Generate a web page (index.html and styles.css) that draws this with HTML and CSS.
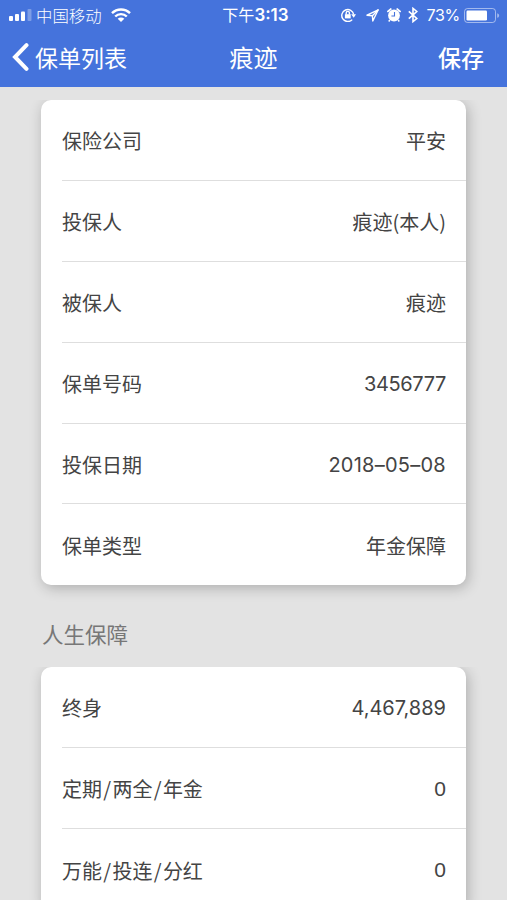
FILE: index.html
```
<!DOCTYPE html>
<html lang="zh-CN">
<head>
    <meta charset="UTF-8">
    <meta name="viewport" content="width=device-width, initial-scale=1.0">
    <title>痕迹</title>
    <link rel="stylesheet" href="styles.css">
</head>
<body>

    <header class="header">
        <!-- 状态栏 -->
        <div class="status-bar">
            <div class="status-left">
                <svg class="signal" width="23" height="12" viewBox="0 0 23 12" fill="#fff">
                    <rect x="0" y="7" width="4" height="5" rx="1"/>
                    <rect x="6" y="5" width="4" height="7" rx="1"/>
                    <rect x="12" y="2.5" width="4" height="9.5" rx="1"/>
                    <rect x="18.5" y="0" width="4" height="12" rx="1" opacity="0.3"/>
                </svg>
                <span class="carrier">中国移动</span>
                <svg class="wifi" width="20" height="14" viewBox="0 0 20 14" fill="none" stroke="#fff" stroke-width="2.4">
                    <path d="M1 5.2a12.7 12.7 0 0 1 18 0"/>
                    <path d="M4.2 8.5a8.2 8.2 0 0 1 11.6 0"/>
                    <path d="M10 14L6.7 10.8a4.7 4.7 0 0 1 6.6 0z" fill="#fff" stroke="none"/>
                </svg>
            </div>
            <span class="time">下午<b>3:13</b></span>
            <div class="status-right">
                <svg width="15" height="14" viewBox="0 0 15 14" fill="none" stroke="#fff" stroke-width="1.4">
                    <path d="M11.2 11.6A6 6 0 1 1 12.7 6.5"/>
                    <path d="M10.2 6.3h4.8l-2.3 3.4z" fill="#fff" stroke="none"/>
                    <rect x="3.9" y="6.2" width="5.8" height="4.2" fill="#fff" stroke="none"/>
                    <path d="M5.2 6.4V5a1.6 1.6 0 0 1 3.2 0v1.4"/>
                </svg>
                <svg class="location" width="13" height="13" viewBox="0 0 13 13" fill="none" stroke="#fff" stroke-width="1.4" stroke-linejoin="round">
                    <path d="M12.2 0.8L1 6.2l5.4.5.4 5.3z"/>
                    <path d="M12.2 0.8L6.4 6.7"/>
                </svg>
                <svg class="alarm" width="14" height="14" viewBox="0 0 14 14">
                    <circle cx="7" cy="7.5" r="5.9" fill="#fff"/>
                    <path d="M1 3.4L3.7 1.1M13 3.4L10.3 1.1" stroke="#fff" stroke-width="1.9" stroke-linecap="round"/>
                    <path d="M2.9 12l-1.2 1.4M11.1 12l1.2 1.4" stroke="#fff" stroke-width="1.5"/>
                    <path d="M7.5 4v4H4.4" fill="none" stroke="#4573dc" stroke-width="1.1"/>
                </svg>
                <svg class="bluetooth" width="10" height="16" viewBox="0 0 10 16" fill="none" stroke="#fff" stroke-width="1.6">
                    <path d="M0.8 4.3L8.8 11.5 5 14.6V1.4L8.8 4.5 0.8 11.7"/>
                </svg>
                <span class="percent">73%</span>
                <svg class="battery" width="36" height="15" viewBox="0 0 36 15" fill="#fff">
                    <rect x="0.5" y="0.5" width="31" height="14" rx="3" fill="none" stroke="#fff" opacity="0.5"/>
                    <rect x="2.5" y="2.5" width="20.5" height="10" rx="1.2"/>
                    <path d="M33.2 5.2c2.6.8 2.6 3.8 0 4.6z" opacity="0.5"/>
                </svg>
            </div>
        </div>

        <!-- 导航栏 -->
        <div class="nav-bar">
            <a class="back">
                <svg width="17" height="28" viewBox="0 0 17 28" fill="none" stroke="#fff" stroke-width="4" stroke-linecap="round">
                    <path d="M14.5 2.2L3 14 14.5 25.8"/>
                </svg>
                保单列表
            </a>
            <h1 class="title">痕迹</h1>
            <a class="save">保存</a>
        </div>
    </header>

    <main class="content">
        <div class="card">
            <div class="row"><span>保险公司</span><span>平安</span></div>
            <div class="row"><span>投保人</span><span>痕迹(本人)</span></div>
            <div class="row"><span>被保人</span><span>痕迹</span></div>
            <div class="row"><span>保单号码</span><span class="number policy-no">3456777</span></div>
            <div class="row"><span>投保日期</span><span class="number date">2018–05–08</span></div>
            <div class="row"><span>保单类型</span><span>年金保障</span></div>
        </div>

        <h2 class="section-title">人生保障</h2>

        <div class="card">
            <div class="row"><span>终身</span><span class="number">4,467,889</span></div>
            <div class="row"><span>定期<i>/</i>两全<i>/</i>年金</span><span class="number zero">0</span></div>
            <div class="row"><span>万能<i>/</i>投连<i>/</i>分红</span><span class="number zero">0</span></div>
        </div>
    </main>

</body>
</html>
```

FILE: styles.css
```
* {
    box-sizing: border-box;
}

body {
    display: flex;
    flex-direction: column;
    margin: 0;
    height: 100vh;
    overflow: hidden;
    background-color: #e3e3e3;
    color: #444;
    font-family: 'Noto Sans CJK SC', sans-serif;
}

.header {
    flex: none;
    height: 87px;
    background-color: #4573dc;
    color: white;
}

/* 状态栏 */
.status-bar {
    display: grid;
    grid-template-columns: 1fr auto 1fr;
    align-items: center;
    height: 30px;
    padding: 0 7px 0 9px;
    font-size: 16px;
    line-height: 30px;
}

.status-left,
.status-right {
    display: flex;
    align-items: center;
}

.status-right {
    justify-content: flex-end;
}

.carrier {
    margin-left: 4px;
    font-size: 16.4px;
    font-weight: 300;
}

.wifi {
    margin-left: 9px;
}

.time {
    padding-left: 2px;
    font-family: Inter, 'Noto Sans CJK SC', sans-serif;
}

.time b {
    font-size: 17px;
    font-weight: 600;
}

.location {
    margin-left: 10px;
}

.alarm {
    margin-left: 8px;
}

.bluetooth {
    margin-left: 7px;
}

.percent {
    margin-left: 9px;
    font-family: Inter, sans-serif;
    font-size: 16px;
    letter-spacing: -0.3px;
}

.battery {
    margin-left: 4px;
}

/* 导航栏 */
.nav-bar {
    display: grid;
    grid-template-columns: 1fr auto 1fr;
    align-items: center;
    height: 54px;
    padding: 0 12px;
    font-size: 23px;
    line-height: 54px;
}

.back {
    display: flex;
    align-items: center;
    gap: 6px;
}

.title {
    margin: 0;
    font-size: 24px;
    font-weight: 400;
}

.save {
    padding-right: 11px;
    text-align: right;
    font-weight: 500;
}

/* 卡片 */
.content {
    flex: 1;
    min-height: 0;
    overflow: hidden;
    padding: 13px 41px 0;
}

.card {
    background-color: white;
    border-radius: 10px;
    box-shadow: 2px 3px 14px rgba(0, 0, 0, 0.24);
    clip-path: inset(0 -20px -20px -20px);
}

.row {
    display: flex;
    justify-content: space-between;
    align-items: center;
    height: 80.9px;
    margin-left: 21px;
    padding-top: 2px;
    padding-right: 20px;
    border-bottom: 1px solid #dedede;
    font-size: 20px;
}

.row:last-child {
    border-bottom: none;
}

.row i {
    margin: 0 1.3px;
    font-style: normal;
}

.number {
    font-family: Inter, sans-serif;
}

.policy-no {
    letter-spacing: -0.35px;
}

.date {
    letter-spacing: 0.25px;
}

.zero {
    font-family: 'Liberation Sans', sans-serif;
    font-size: 21px;
}

.section-title {
    margin: 0;
    height: 81.6px;
    padding-top: 16px;
    padding-left: 1px;
    color: #777;
    font-size: 21.5px;
    font-weight: 400;
    line-height: 66px;
}
```
